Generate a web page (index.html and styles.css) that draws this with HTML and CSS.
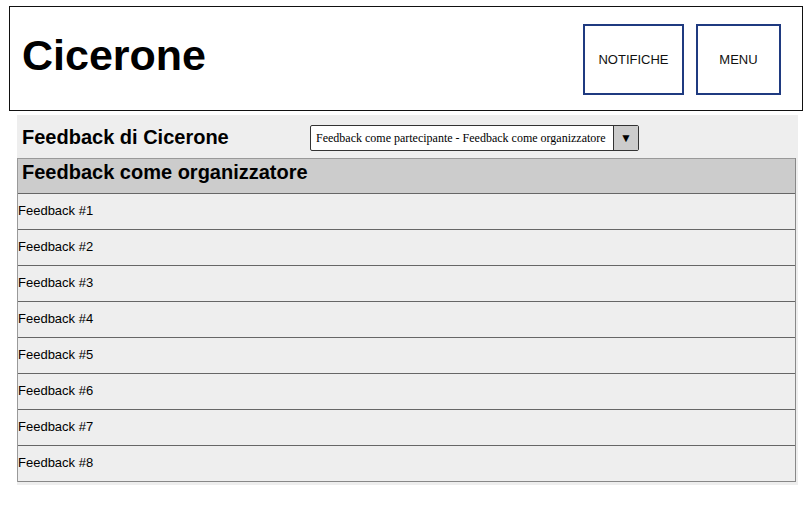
FILE: index.html
```html
<!DOCTYPE html>
<html lang="it">
<head>
<meta charset="utf-8">
<title>Cicerone</title>
<link rel="stylesheet" href="styles.css">
</head>
<body>
<header class="topbar">
  <h1 class="brand">Cicerone</h1>
  <nav class="actions">
    <button class="btn btn-notif">NOTIFICHE</button>
    <button class="btn btn-menu">MENU</button>
  </nav>
</header>
<main class="panel">
  <div class="panel-head">
    <h2 class="panel-title">Feedback di Cicerone</h2>
    <div class="select">
      <span class="select-text">Feedback come partecipante - Feedback come organizzatore</span>
      <span class="select-arrow">&#9660;</span>
    </div>
  </div>
  <section class="list">
    <h3 class="list-head">Feedback come organizzatore</h3>
    <div class="row">Feedback #1</div>
    <div class="row">Feedback #2</div>
    <div class="row">Feedback #3</div>
    <div class="row">Feedback #4</div>
    <div class="row">Feedback #5</div>
    <div class="row">Feedback #6</div>
    <div class="row">Feedback #7</div>
    <div class="row">Feedback #8</div>
  </section>
</main>
</body>
</html>
```

FILE: styles.css
```css
* { box-sizing: border-box; }
html, body { margin: 0; padding: 0; background: #fff; }
body { font-family: "Liberation Sans", Arial, sans-serif; color: #000; }

.topbar {
  margin: 6px 0 0 9px;
  width: 794px;
  height: 105px;
  border: 1px solid #111;
  display: flex;
  align-items: center;
  justify-content: space-between;
  padding: 0 21px 0 12px;
}
.brand {
  margin: 0;
  font-size: 43px;
  font-weight: bold;
  line-height: 1;
  position: relative;
  top: -3px;
}
.actions {
  display: flex;
  gap: 12px;
  align-self: flex-start;
  margin-top: 17px;
}
.btn {
  height: 71px;
  border: 2px solid #1f3a80;
  background: #fff;
  font-family: "Liberation Sans", Arial, sans-serif;
  font-size: 13px;
  color: #111;
  padding: 0;
}
.btn-notif { width: 101px; }
.btn-menu { width: 85px; }

.panel {
  margin: 4px 0 0 17px;
  width: 781px;
  background: #eeeeee;
  padding-bottom: 3px;
}
.panel-head {
  height: 43px;
  display: flex;
  align-items: center;
  padding-left: 5px;
}
.panel-title {
  margin: 0;
  width: 288px;
  font-size: 20px;
  font-weight: bold;
  line-height: 1;
}
.select {
  width: 329px;
  height: 26px;
  border: 1px solid #333;
  border-radius: 2px;
  background: #fff;
  display: flex;
  align-items: stretch;
  position: relative;
  top: 1px;
}
.select-text {
  flex: 1;
  font-family: "Liberation Serif", "Times New Roman", serif;
  font-size: 12px;
  line-height: 25px;
  padding-left: 5px;
  white-space: nowrap;
  overflow: hidden;
}
.select-arrow {
  width: 25px;
  background: #cccccc;
  border-left: 1px solid #333;
  font-size: 12px;
  display: flex;
  align-items: center;
  justify-content: center;
}

.list {
  width: 779px;
  border-left: 1px solid #999;
  border-right: 1px solid #888;
}
.list-head {
  margin: 0;
  height: 36px;
  background: #cccccc;
  border-top: 1px solid #999;
  border-bottom: 1px solid #666;
  font-size: 20px;
  font-weight: bold;
  line-height: 26px;
  padding-left: 4px;
}
.row {
  height: 36px;
  border-bottom: 1px solid #666;
  font-size: 13px;
  line-height: 34px;
  padding-left: 0;
}
.row:last-child { border-bottom-color: #888; }
```
